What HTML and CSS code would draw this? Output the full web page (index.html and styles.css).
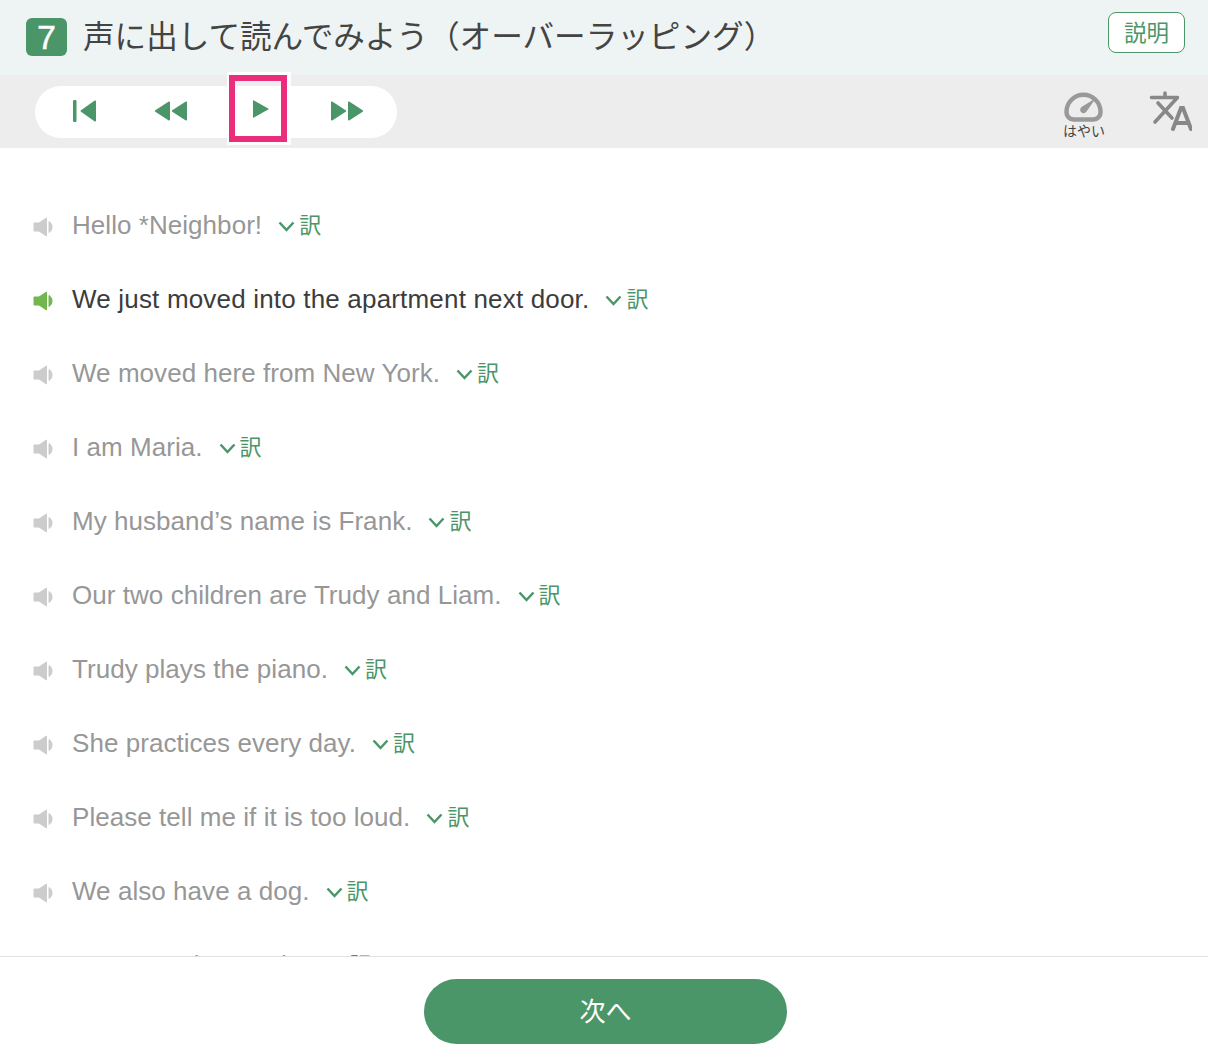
FILE: index.html
```html
<!DOCTYPE html>
<html lang="ja">
<head>
    <meta charset="UTF-8">
    <title>オーバーラッピング</title>
    <link rel="stylesheet" href="styles.css">
</head>
<body>
    <div class="app">
        <header class="title-bar">
            <span class="step-no">7</span>
            <h1 class="title">声に出して読んでみよう（オーバーラッピング）</h1>
            <button class="help-button">説明</button>
        </header>

        <div class="tool-bar">
            <div class="player">
                <button class="player-btn first">
                    <svg width="26" height="24" viewBox="0 0 26 24"><rect x="1" y="1" width="3.5" height="22" rx="1.2"/><path d="M24 2.5v19a1 1 0 0 1-1.6.8L9 12.8a1 1 0 0 1 0-1.6L22.4 1.700a1 1 0 0 1 1.600.800z"/></svg>
                </button>
                <button class="player-btn rewind">
                    <svg width="34" height="20" viewBox="0 0 34 20"><path d="M16 1.500v17a1 1 0 0 1-1.600.800L1.300 10.800a1 1 0 0 1 0-1.600L14.400.700a1 1 0 0 1 1.600.800z"/><path d="M33 1.500v17a1 1 0 0 1-1.600.800L18.300 10.800a1 1 0 0 1 0-1.600L31.400.700a1 1 0 0 1 1.600.800z"/></svg>
                </button>
                <button class="player-btn play">
                    <svg width="18" height="20" viewBox="0 0 18 20"><path d="M1 1v18l16-9z"/></svg>
                </button>
                <button class="player-btn forward">
                    <svg width="34" height="20" viewBox="0 0 34 20"><path d="M1 1.500v17a1 1 0 0 0 1.600.800l13.100-8.500a1 1 0 0 0 0-1.600L2.600.700A1 1 0 0 0 1 1.500z"/><path d="M18 1.500v17a1 1 0 0 0 1.600.800l13.100-8.500a1 1 0 0 0 0-1.600L19.600.700A1 1 0 0 0 18 1.500z"/></svg>
                </button>
            </div>
            <div class="highlight"></div>
            <div class="tools">
                <div class="speed">
                    <svg width="40" height="31" viewBox="0 0 40 31"><path class="gauge" d="M9.500 28.500H29.500a7 7 0 0 0 7-7V20.750a17 17 0 1 0-34 0V21.500a7 7 0 0 0 7 7z"/><path class="needle" d="M32 7 22.500 20.500a3.400 3.400 0 1 1-5-4.400z"/></svg>
                    <span class="speed-label">はやい</span>
                </div>
                <svg class="translate" width="44" height="40" viewBox="0 0 44 40">
                    <path class="tr-bar" d="M3.500 6.500h26M17 2v4M29 7 7 31M10 12l14 15"/>
                    <path class="tr-a" d="M25 38 33 17h2l8 21M28 32h12"/>
                </svg>
            </div>
        </div>

        <main class="sentences">
            <div class="line">
                <svg class="speaker" width="21" height="20" viewBox="0 0 21 20"><path d="M1 6h5L13.500 1V19L6 14H1z"/><path d="M16 4.500c4 2.500 4 8.500 0 11z"/></svg>
                <span class="en">Hello *Neighbor!</span>
                <span class="trans"><svg width="17" height="11" viewBox="0 0 17 11"><path d="M1.500 1.500 8.500 9l7-7.500"/></svg>訳</span>
            </div>
            <div class="line current">
                <svg class="speaker" width="21" height="20" viewBox="0 0 21 20"><path d="M1 6h5L13.500 1V19L6 14H1z"/><path d="M16 4.500c4 2.500 4 8.500 0 11z"/></svg>
                <span class="en">We just moved into the apartment next door.</span>
                <span class="trans"><svg width="17" height="11" viewBox="0 0 17 11"><path d="M1.500 1.500 8.500 9l7-7.500"/></svg>訳</span>
            </div>
            <div class="line">
                <svg class="speaker" width="21" height="20" viewBox="0 0 21 20"><path d="M1 6h5L13.500 1V19L6 14H1z"/><path d="M16 4.500c4 2.500 4 8.500 0 11z"/></svg>
                <span class="en">We moved here from New York.</span>
                <span class="trans"><svg width="17" height="11" viewBox="0 0 17 11"><path d="M1.500 1.500 8.500 9l7-7.500"/></svg>訳</span>
            </div>
            <div class="line">
                <svg class="speaker" width="21" height="20" viewBox="0 0 21 20"><path d="M1 6h5L13.500 1V19L6 14H1z"/><path d="M16 4.500c4 2.500 4 8.500 0 11z"/></svg>
                <span class="en">I am Maria.</span>
                <span class="trans"><svg width="17" height="11" viewBox="0 0 17 11"><path d="M1.500 1.500 8.500 9l7-7.500"/></svg>訳</span>
            </div>
            <div class="line">
                <svg class="speaker" width="21" height="20" viewBox="0 0 21 20"><path d="M1 6h5L13.500 1V19L6 14H1z"/><path d="M16 4.500c4 2.500 4 8.500 0 11z"/></svg>
                <span class="en">My husband’s name is Frank.</span>
                <span class="trans"><svg width="17" height="11" viewBox="0 0 17 11"><path d="M1.500 1.500 8.500 9l7-7.500"/></svg>訳</span>
            </div>
            <div class="line">
                <svg class="speaker" width="21" height="20" viewBox="0 0 21 20"><path d="M1 6h5L13.500 1V19L6 14H1z"/><path d="M16 4.500c4 2.500 4 8.500 0 11z"/></svg>
                <span class="en">Our two children are Trudy and Liam.</span>
                <span class="trans"><svg width="17" height="11" viewBox="0 0 17 11"><path d="M1.500 1.500 8.500 9l7-7.500"/></svg>訳</span>
            </div>
            <div class="line">
                <svg class="speaker" width="21" height="20" viewBox="0 0 21 20"><path d="M1 6h5L13.500 1V19L6 14H1z"/><path d="M16 4.500c4 2.500 4 8.500 0 11z"/></svg>
                <span class="en">Trudy plays the piano.</span>
                <span class="trans"><svg width="17" height="11" viewBox="0 0 17 11"><path d="M1.500 1.500 8.500 9l7-7.500"/></svg>訳</span>
            </div>
            <div class="line">
                <svg class="speaker" width="21" height="20" viewBox="0 0 21 20"><path d="M1 6h5L13.500 1V19L6 14H1z"/><path d="M16 4.500c4 2.500 4 8.500 0 11z"/></svg>
                <span class="en">She practices every day.</span>
                <span class="trans"><svg width="17" height="11" viewBox="0 0 17 11"><path d="M1.500 1.500 8.500 9l7-7.500"/></svg>訳</span>
            </div>
            <div class="line">
                <svg class="speaker" width="21" height="20" viewBox="0 0 21 20"><path d="M1 6h5L13.500 1V19L6 14H1z"/><path d="M16 4.500c4 2.500 4 8.500 0 11z"/></svg>
                <span class="en">Please tell me if it is too loud.</span>
                <span class="trans"><svg width="17" height="11" viewBox="0 0 17 11"><path d="M1.500 1.500 8.500 9l7-7.500"/></svg>訳</span>
            </div>
            <div class="line">
                <svg class="speaker" width="21" height="20" viewBox="0 0 21 20"><path d="M1 6h5L13.500 1V19L6 14H1z"/><path d="M16 4.500c4 2.500 4 8.500 0 11z"/></svg>
                <span class="en">We also have a dog.</span>
                <span class="trans"><svg width="17" height="11" viewBox="0 0 17 11"><path d="M1.500 1.500 8.500 9l7-7.500"/></svg>訳</span>
            </div>
            <div class="line">
                <svg class="speaker" width="21" height="20" viewBox="0 0 21 20"><path d="M1 6h5L13.500 1V19L6 14H1z"/><path d="M16 4.500c4 2.500 4 8.500 0 11z"/></svg>
                <span class="en">Her name is Spanky.</span>
                <span class="trans"><svg width="17" height="11" viewBox="0 0 17 11"><path d="M1.500 1.500 8.500 9l7-7.500"/></svg>訳</span>
            </div>
        </main>

        <footer class="bottom-bar">
            <button class="next-button">次へ</button>
        </footer>
    </div>
</body>
</html>
```

FILE: styles.css
```css
* {
    box-sizing: border-box;
}

body {
    margin: 0;
    padding: 0;
    background-color: #fff;
    font-family: "Liberation Sans", "Noto Sans CJK JP", sans-serif;
}

button {
    font-family: inherit;
    border: none;
    background: none;
    padding: 0;
}

.app {
    height: 1060px;
    display: flex;
    flex-direction: column;
    overflow: hidden;
}

.title-bar {
    height: 75px;
    flex-shrink: 0;
    background-color: #eef4f4;
    display: flex;
    align-items: center;
    padding: 0 23px 2px 26px;
}

.step-no {
    width: 41px;
    height: 38px;
    background-color: #4b9669;
    border-radius: 6px;
    color: #fff;
    font-size: 34px;
    line-height: 38px;
    text-align: center;
    -webkit-text-stroke: 0.4px #fff;
}

.title {
    margin: 0 0 6px 16px;
    flex: 1;
    font-family: "Noto Sans CJK JP", sans-serif;
    font-size: 31.6px;
    font-weight: 400;
    color: #444;
    white-space: nowrap;
}

.help-button {
    width: 77px;
    height: 41px;
    margin-bottom: 8px;
    padding-bottom: 4px;
    background-color: #fff;
    border: 1px solid #4b9669;
    border-radius: 8px;
    color: #4b9669;
    font-family: "Noto Sans CJK JP", sans-serif;
    font-size: 22.500px;
}

.tool-bar {
    height: 73px;
    flex-shrink: 0;
    background-color: #ededed;
    display: flex;
    align-items: flex-start;
    justify-content: space-between;
    padding: 11px 16px 0 35px;
    position: relative;
}

.player {
    width: 362px;
    height: 52px;
    background-color: #fff;
    border-radius: 26px;
    display: flex;
    align-items: center;
}

.player-btn {
    display: flex;
    fill: #4b9669;
    margin-bottom: 2px;
}

.first { margin-left: 37px; }
.rewind { margin-left: 56px; }
.play { margin-left: 64px; margin-top: -7px; margin-bottom: 0; }
.forward { margin-left: 60px; }

/* pink marker drawn over the play button */
.highlight {
    position: absolute;
    left: 229px;
    top: 0;
    width: 58px;
    height: 67px;
    border: 6px solid #ea2e7c;
    box-shadow: 1px 0 0 3px rgba(255, 255, 255, 0.85);
}

.tools {
    display: flex;
    align-items: flex-start;
    gap: 42px;
    padding-top: 5px;
}

.speed {
    display: flex;
    flex-direction: column;
    align-items: center;
    width: 44px;
}

.gauge {
    fill: none;
    stroke: #999;
    stroke-width: 4.5;
}

.needle {
    fill: #999;
}

.speed-label {
    font-family: "Noto Sans CJK JP", sans-serif;
    font-size: 14px;
    line-height: 14px;
    color: #444;
    margin-top: 1px;
    white-space: nowrap;
}

.translate {
    fill: none;
    stroke: #888;
    stroke-linecap: round;
}

.tr-bar {
    stroke-width: 3.6;
}

.tr-a {
    stroke-width: 4;
}

.sentences {
    flex: 1;
    min-height: 0;
    overflow: hidden;
    padding: 40px 0 0 33px;
}

.line {
    height: 74px;
    display: flex;
    align-items: flex-start;
    padding-top: 20px;
}

.speaker {
    margin-top: 9px;
    fill: #ccc;
    stroke: #ccc;
    stroke-width: 1;
    stroke-linejoin: round;
    flex-shrink: 0;
}

.en {
    margin-left: 18px;
    font-size: 26px;
    line-height: 34px;
    letter-spacing: 0.05px;
    color: #979797;
    white-space: nowrap;
}

.current .en {
    color: #3c3c3c;
    letter-spacing: 0.18px;
}

.current .speaker {
    fill: #72b650;
    stroke: #72b650;
}

.trans {
    margin-left: 16px;
    display: flex;
    align-items: center;
    height: 34px;
    padding-bottom: 4px;
    font-family: "Noto Sans CJK JP", sans-serif;
    font-size: 22px;
    color: #4b9669;
}

.trans svg {
    fill: none;
    stroke: #4b9669;
    stroke-width: 2.500;
    margin: 7px 4px 0 0;
}

.bottom-bar {
    height: 104px;
    flex-shrink: 0;
    background-color: #fff;
    border-top: 1px solid #e2e2e2;
    display: flex;
    justify-content: center;
    padding-top: 22px;
    padding-left: 3px;
}

.next-button {
    width: 363px;
    height: 65px;
    padding-bottom: 4px;
    background-color: #4b9669;
    border-radius: 33px / 33px;
    color: #fff;
    font-family: "Noto Sans CJK JP", sans-serif;
    font-size: 26px;
}
```
